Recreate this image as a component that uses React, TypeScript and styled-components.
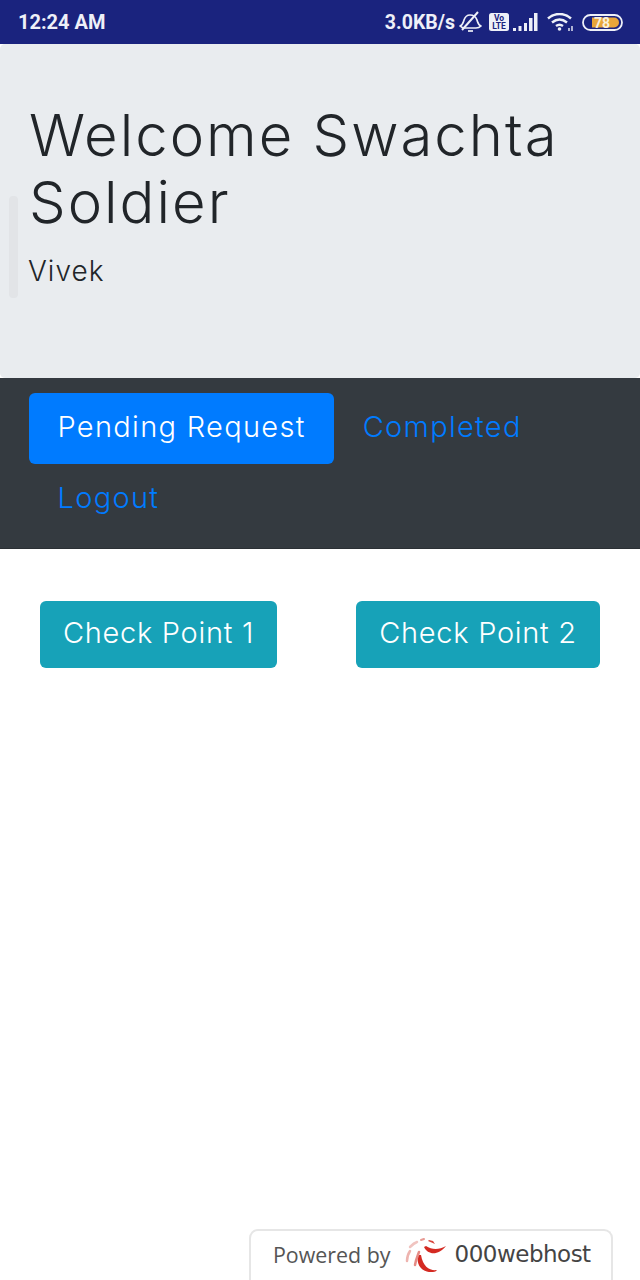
import React from 'react';
import styled, { createGlobalStyle } from 'styled-components';

const GlobalStyle = createGlobalStyle`
    html, body {
        margin: 0;
        padding: 0;
        background: #fff;
    }
    * {
        box-sizing: border-box;
    }
`;

const Page = styled.div`
    position: relative;
    width: 640px;
    height: 1280px;
    overflow: hidden;
    font-family: Inter, "Open Sans", sans-serif;
    color: #212529;
`;

const StatusBar = styled.div`
    height: 44px;
    background: #1a237e;
    color: #eef0f8;
    display: flex;
    align-items: center;
    justify-content: space-between;
    padding: 0 17px 0 18px;
    font-family: Roboto, sans-serif;
    font-weight: 700;
    font-size: 20px;
`;

const StatusIcons = styled.div`
    display: flex;
    align-items: center;
`;

const Speed = styled.span`
    font-size: 19.5px;
`;

const IconSlot = styled.span<{ $gap: number }>`
    display: flex;
    margin-left: ${p => p.$gap}px;
`;

const Jumbotron = styled.div`
    position: relative;
    height: 334px;
    background: #e9ecef;
    border-radius: 5px;
    padding: 58px 29px 0;
`;

const Title = styled.h1`
    margin: 0;
    font-size: 58px;
    line-height: 67px;
    font-weight: 300;
    letter-spacing: 2px;
`;

const Name = styled.p`
    margin: 15px 0 0 -1px;
    font-size: 28px;
    line-height: 40px;
    font-weight: 300;
    letter-spacing: 1px;
`;

const ScrollThumb = styled.div`
    position: absolute;
    left: 9px;
    top: 152px;
    width: 9px;
    height: 102px;
    border-radius: 4px;
    background: #e2e4e7;
`;

const Nav = styled.nav`
    height: 171px;
    background: #343a40;
    padding: 15px 29px 0;
    display: flex;
    flex-wrap: wrap;
    align-content: flex-start;
    border-bottom: 1px solid #2b3035;
`;

const NavItem = styled.a<{ $active?: boolean }>`
    height: 71px;
    display: flex;
    align-items: center;
    padding: 0 28.5px 4px;
    font-size: 29px;
    font-weight: 300;
    letter-spacing: 1.3px;
    border-radius: 6px;
    color: ${p => (p.$active ? '#fff' : '#007bff')};
    background: ${p => (p.$active ? '#007bff' : 'transparent')};
`;

const Buttons = styled.div`
    display: flex;
    justify-content: space-between;
    padding: 52px 40px 0;
`;

const CheckButton = styled.button<{ $width: number }>`
    width: ${p => p.$width}px;
    height: 67px;
    padding: 0 0 4px;
    border: 0;
    border-radius: 6px;
    background: #17a2b8;
    color: #fff;
    font-family: inherit;
    font-size: 29px;
    font-weight: 300;
    letter-spacing: 0.7px;
`;

const HostBadge = styled.div`
    position: absolute;
    left: 249px;
    bottom: 0;
    width: 364px;
    height: 51px;
    background: #fff;
    border: 2px solid #e6e6e6;
    border-bottom: 0;
    border-radius: 9px 9px 0 0;
    display: flex;
    align-items: center;
    padding: 0 0 3px 22px;
    font-family: "Open Sans", sans-serif;
    font-size: 21.4px;
    color: #555;
`;

const HostName = styled.span`
    font-family: "DejaVu Sans", sans-serif;
    font-size: 23px;
    letter-spacing: -0.5px;
    color: #444;
`;

const BadgeLogo = styled.svg`
    margin: 0 5px 0 9px;
    flex-shrink: 0;
`;

const BellIcon = () => (
    <svg width="24" height="22" viewBox="0 0 24 22" fill="none" stroke="#eef0f8" strokeWidth="1.700" strokeLinejoin="round">
        <path d="M2 15c3-1 3-3 4-6 1-3 3-5 6-5s6 2 7 5c1 3 1 5 4 6-1 1-3 2-5 2H7c-2 0-4-1-5-2z" />
        <path d="M10 20h5" />
        <path d="M4 19L20 1" strokeWidth="2" />
    </svg>
);

const VolteIcon = () => (
    <svg width="20" height="18" viewBox="0 0 20 18">
        <rect width="20" height="18" rx="2.500" fill="#eef0f8" />
        <text x="10" y="8" fontSize="8.500" fontWeight="700" fontFamily="Roboto, sans-serif" textAnchor="middle" fill="#1a237e">Vo</text>
        <text x="10" y="16" fontSize="8.500" fontWeight="700" fontFamily="Roboto, sans-serif" textAnchor="middle" fill="#1a237e">LTE</text>
    </svg>
);

const SignalIcon = () => (
    <svg width="25" height="18" viewBox="0 0 25 18" fill="#eef0f8">
        <rect x="0" y="15" width="3" height="3" />
        <rect x="5.500" y="13" width="3" height="5" />
        <rect x="11" y="10" width="3" height="8" />
        <rect x="16" y="5" width="3.500" height="13" />
        <rect x="21" y="0" width="3.500" height="18" />
    </svg>
);

const WifiIcon = () => (
    <svg width="28" height="18" viewBox="0 0 28 18" fill="none" stroke="#eef0f8" strokeWidth="2.500">
        <path d="M1 5.500c7-6 16-6 23 0" />
        <path d="M5 9.500c5-4 10-4 15 0" />
        <path d="M9 13c2.500-1.800 4.500-1.800 7 0" />
        <circle cx="12.500" cy="16" r="1.800" fill="#eef0f8" stroke="none" />
        <path d="M22 15v3M25 13v5" strokeWidth="1.400" />
    </svg>
);

const BatteryIcon = () => (
    <svg width="41" height="17" viewBox="0 0 41 17">
        <rect x="1" y="1" width="39" height="15" rx="7.500" fill="none" stroke="#eef0f8" strokeWidth="1.800" />
        <path d="M10 3.500h22a5 5 0 0 1 0 10H10z" fill="#e8a63a" />
        <text x="20" y="13.500" fontSize="14" fontWeight="700" fontFamily="Roboto, sans-serif" textAnchor="middle" fill="#f8f0dc">78</text>
    </svg>
);

const SwirlLogo = () => (
    <BadgeLogo width="50" height="46" viewBox="0 0 50 46">
        <path d="M18 24c-2 9 3 18 15 17 2 0 3-1 4-2-7 1-14-3-16-15z" fill="#d42a22" />
        <path d="M24 16c4 8 14 9 22-1-7 4-14 4-20 0z" fill="#d42a22" />
        <path d="M28 10l7 3-2-3-4-1z" fill="#d8453c" />
        <path d="M15 34c1-6 3-10 4-13" fill="none" stroke="#e58b85" strokeWidth="2.500" strokeLinecap="round" />
        <path d="M7 30c0-4 1-7 3-10" fill="none" stroke="#eeb4af" strokeWidth="2.500" strokeLinecap="round" />
        <path d="M10 16c2-2 4-4 7-5" fill="none" stroke="#f0c4c0" strokeWidth="2.500" strokeLinecap="round" />
        <path d="M21 9l3-1" fill="none" stroke="#e79a94" strokeWidth="2" strokeLinecap="round" />
    </BadgeLogo>
);

export default function App() {
    return (
        <Page>
            <GlobalStyle />
            <StatusBar>
                <span>12:24 AM</span>
                <StatusIcons>
                    <Speed>3.0KB/s</Speed>
                    <IconSlot $gap={3}><BellIcon /></IconSlot>
                    <IconSlot $gap={7}><VolteIcon /></IconSlot>
                    <IconSlot $gap={4}><SignalIcon /></IconSlot>
                    <IconSlot $gap={9}><WifiIcon /></IconSlot>
                    <IconSlot $gap={7}><BatteryIcon /></IconSlot>
                </StatusIcons>
            </StatusBar>
            <Jumbotron>
                <ScrollThumb />
                <Title>Welcome Swachta Soldier</Title>
                <Name>Vivek</Name>
            </Jumbotron>
            <Nav>
                <NavItem $active>Pending Request</NavItem>
                <NavItem>Completed</NavItem>
                <NavItem>Logout</NavItem>
            </Nav>
            <Buttons>
                <CheckButton $width={237}>Check Point 1</CheckButton>
                <CheckButton $width={244}>Check Point 2</CheckButton>
            </Buttons>
            <HostBadge>
                Powered by
                <SwirlLogo />
                <HostName>000webhost</HostName>
            </HostBadge>
        </Page>
    );
}
